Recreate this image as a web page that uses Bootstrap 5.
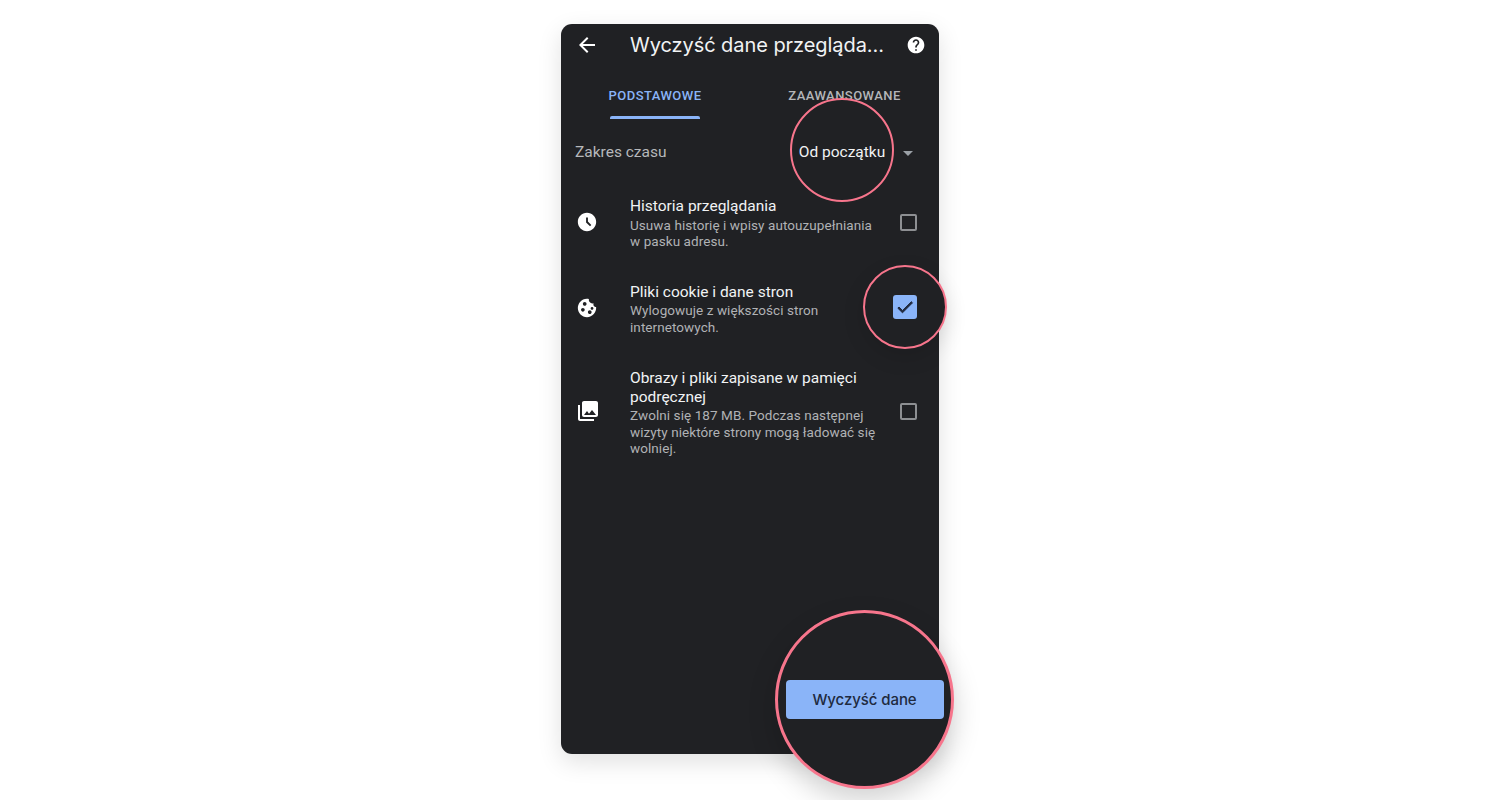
<!DOCTYPE html>
<html lang="pl">
<head>
<meta charset="utf-8">
<title>Wyczyść dane przeglądania</title>
<link href="https://cdn.jsdelivr.net/npm/bootstrap@5.3.0/dist/css/bootstrap.min.css" rel="stylesheet">
<style>
html,body{height:800px;overflow:hidden;background:#fff;}
body{padding-top:24px;font-family:Roboto,"Liberation Sans",sans-serif;}
.phone{position:relative;width:378px;height:730px;background:#202124;border-radius:11px;box-shadow:0 8px 24px rgba(0,0,0,.12);color:#fff;}
.topbar{height:42px;padding:0 13px 0 14px;}
.topbar .slot-icon{width:55px;}
.apptitle{font-family:Inter,"Liberation Sans",sans-serif;font-size:20px;font-weight:400;letter-spacing:-.06px;line-height:42px;white-space:nowrap;color:#f1f3f4;}
.tabrow{height:52px;}
.tabitem{width:189px;height:52px;font-size:13px;font-weight:500;letter-spacing:.45px;text-align:center;padding-top:22px;line-height:16px;color:#b4b6b9;position:relative;}
.tabitem.on{color:#8ab4f8;padding-right:1px;}
.tabitem.on::after{content:"";position:absolute;left:49px;bottom:-.5px;width:90px;height:2.5px;border-radius:2px 2px 0 0;background:#8ab4f8;}
.rangerow{height:68px;padding:2px 26px 0 14px;font-size:15.5px;color:#b6b8bb;}
.caretmark{width:0;height:0;border-left:5.5px solid transparent;border-right:5.5px solid transparent;border-top:5px solid #9aa0a6;}
.optlist{gap:33.5px;padding-top:11px;}
.optrow{padding:0 22px 0 15px;}
.opticon{width:54px;flex:none;display:flex;margin-bottom:2px;}
.opttext{width:248px;flex:none;white-space:nowrap;}
.opttitle{font-size:15.5px;line-height:19px;color:#f1f3f4;}
.opttitle.wrapok{white-space:normal;}
.optdesc{font-size:13.5px;line-height:16.4px;color:#b0b2b5;letter-spacing:.07px;margin-top:.5px;}
.boxcell{margin-left:auto;margin-bottom:2px;}
.form-check-input.plainbox{width:17px;height:17px;margin:0;background-color:transparent;border:2px solid #8d8f92;border-radius:2px;display:block;}
.ringmark{position:absolute;border:2px solid #f7758c;border-radius:50%;background:#202124;display:flex;align-items:center;justify-content:center;}
.ring-range{left:229px;top:74px;width:104px;height:104px;font-size:15.5px;color:#f1f3f4;padding-top:6px;}
.ring-check{left:302px;top:241px;width:84px;height:84px;box-shadow:0 8px 22px rgba(0,0,0,.12);}
.ring-button{left:214px;top:586px;width:179px;height:179px;border-width:3px;box-shadow:0 12px 28px rgba(0,0,0,.18);}
.bigbox{width:24px;height:24px;border-radius:3px;background:#8ab4f8;display:flex;align-items:center;justify-content:center;color:#202a40;}
.bigbox svg{stroke:currentColor;stroke-width:1.2px;}
.btn.clearbtn{width:158px;height:39px;padding:1px 0 0;background:#8ab4f8;border:0;border-radius:4px;color:#202a40;font-family:Inter,"Liberation Sans",sans-serif;font-size:15px;font-weight:500;letter-spacing:-.08px;}
svg{display:block;fill:currentColor;}
</style>
</head>
<body>
<main class="phone mx-auto">
  <header class="topbar d-flex align-items-center">
    <div class="slot-icon"><svg width="24" height="24" viewBox="0 0 24 24"><path d="M20 11H7.83l5.59-5.59L12 4l-8 8 8 8 1.41-1.41L7.83 13H20v-2z"/></svg></div>
    <div class="apptitle flex-grow-1">Wyczyść dane przegląda...</div>
    <svg width="20" height="20" viewBox="0 0 24 24"><path d="M12 2C6.48 2 2 6.48 2 12s4.48 10 10 10 10-4.48 10-10S17.52 2 12 2zm1 17h-2v-2h2v2zm2.07-7.75l-.9.92C13.45 12.9 13 13.5 13 15h-2v-.5c0-1.1.45-2.1 1.17-2.83l1.24-1.26c.37-.36.59-.86.59-1.41 0-1.1-.9-2-2-2s-2 .9-2 2H8c0-2.21 1.79-4 4-4s4 1.79 4 4c0 .88-.36 1.68-.93 2.25z"/></svg>
  </header>
  <div class="tabrow d-flex">
    <div class="tabitem on">PODSTAWOWE</div>
    <div class="tabitem">ZAAWANSOWANE</div>
  </div>
  <div class="rangerow d-flex align-items-center justify-content-between">
    <span>Zakres czasu</span>
    <span class="caretmark"></span>
  </div>
  <div class="optlist d-flex flex-column">
    <div class="optrow d-flex align-items-center">
      <div class="opticon"><svg width="22" height="22" viewBox="0 0 24 24"><path d="M11.99 2C6.47 2 2 6.48 2 12s4.47 10 9.99 10C17.52 22 22 17.52 22 12S17.52 2 11.99 2zm3.3 14.71L11 12.41V7h2v4.59l3.71 3.71-1.42 1.41z"/></svg></div>
      <div class="opttext">
        <div class="opttitle">Historia przeglądania</div>
        <div class="optdesc">Usuwa historię i wpisy autouzupełniania<br>w pasku adresu.</div>
      </div>
      <div class="boxcell"><input class="form-check-input plainbox" type="checkbox" aria-label="Historia przeglądania"></div>
    </div>
    <div class="optrow d-flex align-items-center">
      <div class="opticon"><svg width="22" height="22" viewBox="0 0 24 24" fill-rule="evenodd"><path d="M21.95 10.99c-1.79-.03-3.7-1.95-2.68-4.22-2.98 1-5.77-1.59-5.19-4.56C6.95.71 2 6.58 2 12c0 5.52 4.48 10 10 10 5.89 0 10.54-5.08 9.95-11.01zM7.5 16c-1.1 0-2-.9-2-2s.9-2 2-2 2 .9 2 2-.9 2-2 2zm2-6.5c-1.1 0-2-.9-2-2s.9-2 2-2 2 .9 2 2-.9 2-2 2zm5.5 9c-1.1 0-2-.9-2-2s.9-2 2-2 2 .9 2 2-.9 2-2 2zm2.5-4.5c-.8 0-1.5-.7-1.5-1.5s.7-1.5 1.5-1.5 1.5.7 1.5 1.5-.7 1.5-1.5 1.5z"/></svg></div>
      <div class="opttext">
        <div class="opttitle">Pliki cookie i dane stron</div>
        <div class="optdesc">Wylogowuje z większości stron<br>internetowych.</div>
      </div>
    </div>
    <div class="optrow d-flex align-items-center">
      <div class="opticon"><svg width="24" height="24" viewBox="0 0 24 24"><path d="M22 16V4c0-1.1-.9-2-2-2H8c-1.1 0-2 .9-2 2v12c0 1.1.9 2 2 2h12c1.1 0 2-.9 2-2zm-11-4l2.03 2.71L16 11l4 5H8l3-4zM2 6v14c0 1.1.9 2 2 2h14v-2H4V6H2z"/></svg></div>
      <div class="opttext">
        <div class="opttitle wrapok">Obrazy i pliki zapisane w pamięci podręcznej</div>
        <div class="optdesc">Zwolni się 187 MB. Podczas następnej<br>wizyty niektóre strony mogą ładować się<br>wolniej.</div>
      </div>
      <div class="boxcell"><input class="form-check-input plainbox" type="checkbox" aria-label="Obrazy i pliki"></div>
    </div>
  </div>
  <div class="ringmark ring-range">Od początku</div>
  <div class="ringmark ring-check"><span class="bigbox"><svg width="20" height="20" viewBox="0 0 24 24"><path d="M9 16.17L4.83 12l-1.42 1.41L9 19 21 7l-1.41-1.41z"/></svg></span></div>
  <div class="ringmark ring-button"><button type="button" class="btn clearbtn">Wyczyść dane</button></div>
</main>
<script src="https://cdn.jsdelivr.net/npm/bootstrap@5.3.0/dist/js/bootstrap.bundle.min.js"></script>
</body>
</html>
